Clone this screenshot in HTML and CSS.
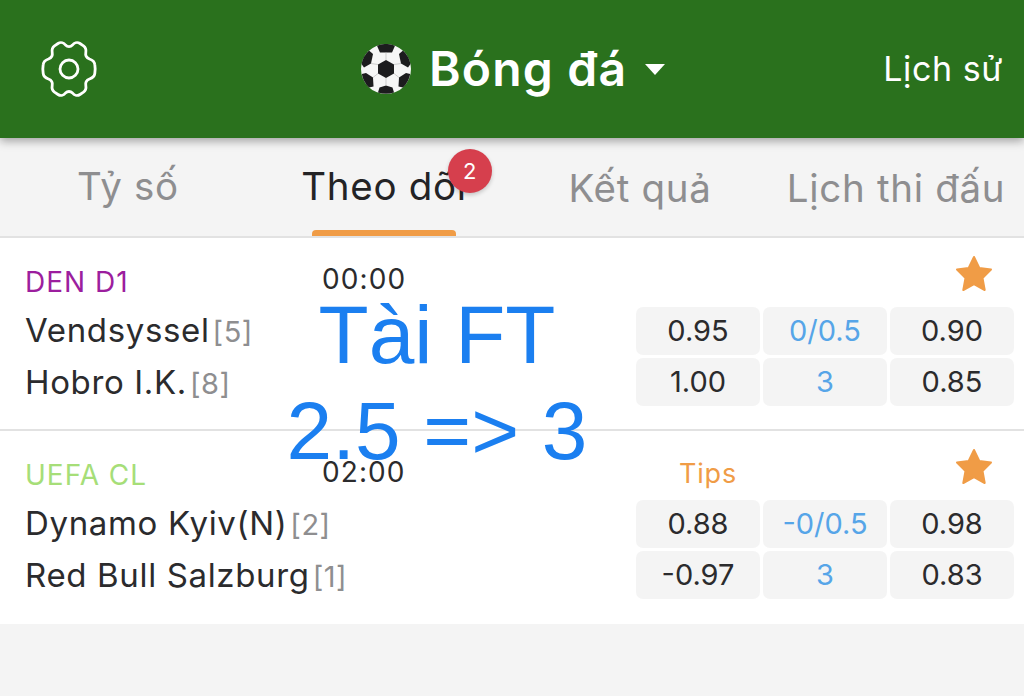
FILE: index.html
```html
<!DOCTYPE html>
<html lang="vi">
<head>
<meta charset="utf-8">
<title>Bóng đá</title>
<link rel="stylesheet" href="styles.css">
</head>
<body>
<div class="app">
  <header class="topbar">
    <svg class="gear" viewBox="0 0 60 60" fill="none" stroke="#fff" stroke-width="2.800" stroke-linejoin="round">
      <path d="M19 4.500C22 2.500 25 4 26.500 6C28.500 8 31.500 8 33.500 6C35 4 38 2.500 41 4.500L44.500 6.800C46.700 8.400 47.300 10.800 46.800 13.500C46.200 16.500 48 19 50.500 20C53.500 21 55.500 23 55.800 25.500C56.300 28.500 56.300 31.500 55.800 34.500C55.500 37 53.500 39 50.500 40C48 41 46.200 43.500 46.800 46.500C47.300 49.200 46.700 51.600 44.500 53.200L41 55.500C38 57.500 35 56 33.500 54C31.500 52 28.500 52 26.500 54C25 56 22 57.500 19 55.500L15.500 53.200C13.300 51.600 12.700 49.200 13.200 46.500C13.800 43.500 12 41 9.500 40C6.500 39 4.500 37 4.200 34.500C3.700 31.500 3.700 28.500 4.200 25.500C4.500 23 6.500 21 9.500 20C12 19 13.800 16.500 13.200 13.500C12.700 10.800 13.300 8.400 15.500 6.800Z"/>
      <circle cx="30" cy="30" r="9"/>
    </svg>
    <div class="title">
      <svg class="ball" viewBox="0 0 50 50">
        <circle cx="25" cy="25" r="25" fill="#f6f6f6"/>
        <g fill="#1c1c1e">
          <path d="M25 16L33 20.500V29.500L25 34L17 29.500V20.500Z"/>
          <path d="M16 1.700A25 25 0 0 1 34 1.700L31 8.500H19Z"/>
          <path d="M8 6.500A25 25 0 0 0 .5 20L3 23.500L10 19.500L12 10Z"/>
          <path d="M42 6.500A25 25 0 0 1 49.500 20L47 23.500L40 19.500L38 10Z"/>
          <path d="M.8 30A25 25 0 0 0 8 43.500L12.500 42.500L12 33.500L5 29Z"/>
          <path d="M49.200 30A25 25 0 0 1 42 43.500L37.500 42.500L38 33.500L45 29Z"/>
          <path d="M17 48.500A25 25 0 0 0 33 48.500L31.500 43.500L25 41.500L18.500 43.500Z"/>
        </g>
        <g stroke="#bbb" stroke-width=".7" fill="none">
          <path d="M25 16V8.500M33 20.500L40 19.500M17 20.500L10 19.500M33 29.500L38 33.500M17 29.500L12 33.500M25 34V41.500"/>
        </g>
      </svg>
      <span class="title-text">Bóng đá</span>
      <span class="caret"></span>
    </div>
    <a class="history">Lịch sử</a>
  </header>

  <nav class="tabs">
    <div class="tab">Tỷ số</div>
    <div class="tab tab-active">Theo dõi<span class="badge">2</span><span class="underline"></span></div>
    <div class="tab tab-low">Kết quả</div>
    <div class="tab tab-low">Lịch thi đấu</div>
  </nav>

  <section class="match">
    <div class="match-head">
      <span class="league league-den">DEN D1</span>
      <span class="time">00:00</span>
      <svg class="star" viewBox="0 0 38 38"><path d="M19 2L24.300 13L36 14.500L27.500 23L29.700 35L19 29.200L8.300 35L10.500 23L2 14.500L13.700 13Z" fill="#f09c46" stroke="#f09c46" stroke-width="2" stroke-linejoin="round"/></svg>
    </div>
    <div class="match-body">
      <div class="teams">
        <div class="team">Vendsyssel<span class="rank">[5]</span></div>
        <div class="team">Hobro I.K.<span class="rank">[8]</span></div>
      </div>
      <div class="odds">
        <div class="odd">0.95</div><div class="odd odd-line">0/0.5</div><div class="odd">0.90</div>
        <div class="odd">1.00</div><div class="odd odd-line">3</div><div class="odd">0.85</div>
      </div>
    </div>
  </section>

  <section class="match">
    <div class="match-head">
      <span class="league league-cl">UEFA CL</span>
      <span class="time">02:00</span>
      <span class="tips">Tips</span>
      <svg class="star" viewBox="0 0 38 38"><path d="M19 2L24.300 13L36 14.500L27.500 23L29.700 35L19 29.200L8.300 35L10.500 23L2 14.500L13.700 13Z" fill="#f09c46" stroke="#f09c46" stroke-width="2" stroke-linejoin="round"/></svg>
    </div>
    <div class="match-body">
      <div class="teams">
        <div class="team">Dynamo Kyiv(N)<span class="rank">[2]</span></div>
        <div class="team">Red Bull Salzburg<span class="rank">[1]</span></div>
      </div>
      <div class="odds">
        <div class="odd">0.88</div><div class="odd odd-line">-0/0.5</div><div class="odd">0.98</div>
        <div class="odd">-0.97</div><div class="odd odd-line">3</div><div class="odd">0.83</div>
      </div>
    </div>
  </section>

  <div class="overlay">
    <div class="overlay-line">Tài FT</div>
    <div class="overlay-line">2.5 =&gt; 3</div>
  </div>
</div>
</body>
</html>
```
FILE: styles.css
```css
* { box-sizing: border-box; }
html, body { margin: 0; padding: 0; }
body {
  width: 1024px;
  height: 696px;
  overflow: hidden;
  background: #f4f4f4;
  font-family: Inter, "Noto Sans", sans-serif;
  color: #2b2b2d;
}
.app { position: relative; height: 696px; }

.topbar {
  position: relative;
  z-index: 2;
  height: 138px;
  padding: 0 21px 0 39px;
  display: flex;
  align-items: center;
  justify-content: space-between;
  background: #2a711d;
  box-shadow: 0 3px 9px rgba(0,0,0,.35);
  color: #fff;
}
.gear { width: 60px; height: 60px; display: block; }
.title { display: flex; align-items: center; margin-left: 262px; }
.ball { width: 50px; height: 50px; display: block; }
.title-text { margin-left: 18px; font-size: 48px; font-weight: 600; line-height: 60px; letter-spacing: 1.200px; }
.caret {
  margin-left: 18px;
  width: 0; height: 0;
  border-left: 10.500px solid transparent;
  border-right: 10.500px solid transparent;
  border-top: 11px solid #fff;
}
.history { margin-left: auto; font-size: 34px; font-weight: 400; line-height: 40px; letter-spacing: .6px; }

.tabs {
  display: grid;
  grid-template-columns: repeat(4, 256px);
  height: 100px;
  border-bottom: 2px solid #e2e2e2;
}
.tab {
  position: relative;
  justify-self: center;
  height: 98px;
  padding-top: 26px;
  font-size: 38.500px;
  line-height: 44px;
  letter-spacing: .7px;
  color: #8e8e90;
}
.tab-low { padding-top: 28px; }
.tab-active { color: #232325; }
.badge {
  position: absolute;
  top: 11px;
  right: -25px;
  width: 44px;
  height: 44px;
  border-radius: 50%;
  background: #d63f4d;
  color: #fff;
  font-size: 22px;
  letter-spacing: 0;
  line-height: 44px;
  text-align: center;
  box-shadow: 0 2px 4px rgba(0,0,0,.2);
}
.underline {
  position: absolute;
  left: 11px;
  bottom: 0;
  width: 144px;
  height: 6px;
  border-radius: 4px 4px 0 0;
  background: #f09c46;
}

.match {
  height: 193px;
  padding: 24px 10px 0 25px;
  background: #fff;
  border-bottom: 2px solid #e2e2e2;
}
.match:last-of-type { border-bottom: 0; }
.match-head { display: flex; align-items: center; height: 38px; }
.league { width: 297px; padding-top: 2px; font-size: 28px; line-height: 38px; letter-spacing: 1px; }
.league-den { color: #9c1e9e; }
.league-cl { color: #a6de78; }
.time { width: 357px; margin-top: -4px; font-size: 28px; line-height: 34px; letter-spacing: 1.100px; color: #2b2b2d; }
.tips { font-size: 27px; line-height: 38px; letter-spacing: .8px; color: #f09c46; }
.star { width: 38px; height: 38px; margin-left: auto; margin-right: 21px; margin-top: -14px; display: block; }

.match-body { display: flex; justify-content: space-between; margin-top: 6px; }
.team { height: 52px; font-size: 33px; line-height: 48px; letter-spacing: .65px; }
.rank { margin-left: 3px; font-size: 29px; letter-spacing: .5px; color: #8e8e90; }
.odds {
  display: grid;
  grid-template-columns: repeat(3, 124px);
  grid-auto-rows: 48px;
  gap: 3px;
  margin-top: 1px;
}
.odd {
  background: #f4f4f4;
  border-radius: 7px;
  text-align: center;
  font-size: 29px;
  line-height: 48px;
}
.odd-line { color: #56a5e8; }

.overlay {
  position: absolute;
  left: 137px;
  top: 287px;
  width: 600px;
  text-align: center;
  font-family: "Liberation Sans", Arial, sans-serif;
  font-size: 82px;
  line-height: 96px;
  color: #1b7ff0;
}
```
